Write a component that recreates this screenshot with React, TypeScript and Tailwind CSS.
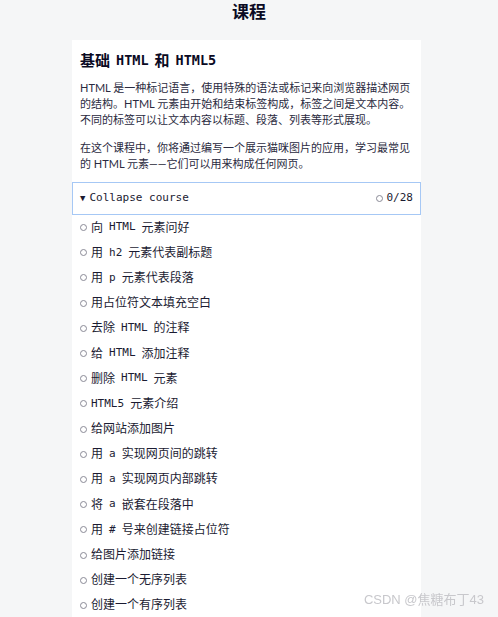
const sans = "font-['Lato','Noto_Sans_CJK_SC',sans-serif]";
const mono = "font-['DejaVu_Sans_Mono','Liberation_Mono',monospace]";

type Part = string | { code: string };

const lessons: Part[][] = [
  ["向", { code: "HTML" }, "元素问好"],
  ["用", { code: "h2" }, "元素代表副标题"],
  ["用", { code: "p" }, "元素代表段落"],
  ["用占位符文本填充空白"],
  ["去除", { code: "HTML" }, "的注释"],
  ["给", { code: "HTML" }, "添加注释"],
  ["删除", { code: "HTML" }, "元素"],
  [{ code: "HTML5" }, "元素介绍"],
  ["给网站添加图片"],
  ["用", { code: "a" }, "实现网页间的跳转"],
  ["用", { code: "a" }, "实现网页内部跳转"],
  ["将", { code: "a" }, "嵌套在段落中"],
  ["用", { code: "#" }, "号来创建链接占位符"],
  ["给图片添加链接"],
  ["创建一个无序列表"],
  ["创建一个有序列表"],
];

function Ring() {
  return <span className="inline-block w-[7px] h-[7px] rounded-full border border-[#8a8a96] shrink-0" />;
}

export default function App() {
  return (
    <div className={`min-h-[617px] bg-[#f5f6f7] text-[#1b1b32] ${sans}`}>
      <h1 className="h-[40px] text-center text-[17px] leading-[24px] font-bold text-[#0a0a23]">
        课程
      </h1>

      <div className="ml-[72px] w-[349px] bg-white pb-4">
        <div className="px-2 pt-[9px]">
          <h2 className="flex items-center gap-[6px] text-[15px] leading-[22px] font-bold text-[#0a0a23]">
            <span>基础</span>
            <span className={`${mono} text-[13.5px]`}>HTML</span>
            <span>和</span>
            <span className={`${mono} text-[13.5px]`}>HTML5</span>
          </h2>
          <p className="mt-[9px] text-[11px] leading-[16px] text-[#2a2a40]">
            HTML 是一种标记语言，使用特殊的语法或标记来向浏览器描述网页的结构。HTML 元素由开始和结束标签构成，标签之间是文本内容。不同的标签可以让文本内容以标题、段落、列表等形式展现。
          </p>
          <p className="mt-[12px] text-[11px] leading-[16px] text-[#2a2a40]">
            在这个课程中，你将通过编写一个展示猫咪图片的应用，学习最常见的 HTML 元素——它们可以用来构成任何网页。
          </p>
        </div>

        <button className="mt-[10px] w-full h-[33px] flex items-center justify-between px-[7px] border-[1.5px] border-[#a6c8f5] bg-white text-[#1b1b32]">
          <span className={`flex items-center gap-[4px] ${mono} text-[11px]`}>
            <span className="text-[9px]">▼</span>
            <span>Collapse course</span>
          </span>
          <span className={`flex items-center gap-[4px] ${mono} text-[11px]`}>
            <Ring />
            <span>0/28</span>
          </span>
        </button>

        <ul className="px-2">
          {lessons.map((parts, i) => (
            <li key={i} className="h-[25.2px] flex items-center gap-[4px] text-[12px] text-[#1b1b32]">
              <Ring />
              <span className="flex items-center gap-[6px]">
                {parts.map((p, j) =>
                  typeof p === "string" ? (
                    <span key={j}>{p}</span>
                  ) : (
                    <code key={j} className={`${mono} text-[11px] text-[#1b1b32]`}>
                      {p.code}
                    </code>
                  )
                )}
              </span>
            </li>
          ))}
        </ul>
      </div>

      <div className="fixed right-[14px] bottom-[8px] text-[13px] text-[#c8c8cc] font-['Liberation_Sans','Noto_Sans_CJK_SC',sans-serif]">
        CSDN @焦糖布丁43
      </div>
    </div>
  );
}
